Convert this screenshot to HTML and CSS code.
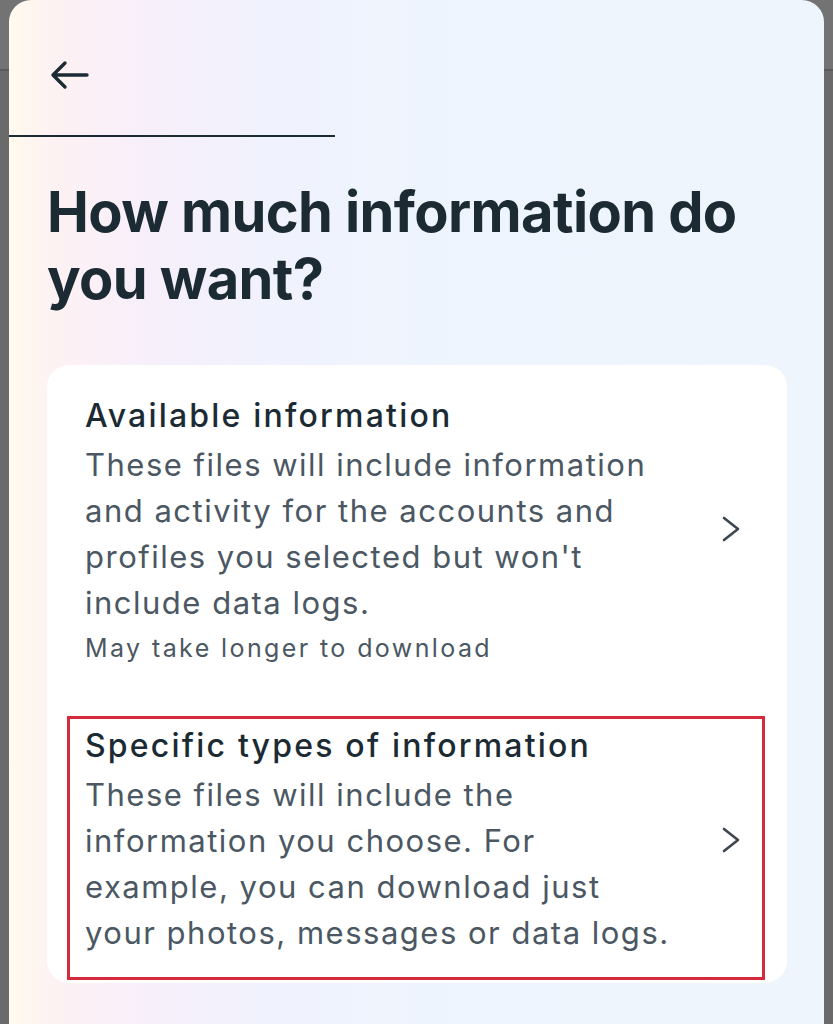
FILE: index.html
```
<html>
	<head>
		<title>Download your information</title>
		<meta name="viewport" content="width=device-width, initial-scale=1">
		<link rel="stylesheet" href="styles.css">
	</head>
	<body>
		<div id="sheet">
			<div id="topbar">
				<svg class="back" width="40" height="30" viewBox="0 0 40 30">
					<path d="M37 15H3M15 3L3 15L15 27" fill="none" stroke="#1c2b33" stroke-width="3.4" stroke-linecap="round" stroke-linejoin="round"/>
				</svg>
			</div>
			<div id="rule"></div>
			<h1>How much information do<br>you want?</h1>
			<div id="card">
				<div class="option">
					<div class="option_text">
						<div class="option_title">Available information</div>
						<div class="option_desc">These files will include information<br>and activity for the accounts and<br>profiles you selected but won't<br>include data logs.</div>
						<div class="option_note">May take longer to download</div>
					</div>
					<svg class="chev" width="18" height="26" viewBox="0 0 18 26">
						<path d="M2 2L16 13L2 24" fill="none" stroke="#3b4650" stroke-width="2.6" stroke-linecap="round" stroke-linejoin="round"/>
					</svg>
				</div>
				<div class="option marked">
					<div class="option_text">
						<div class="option_title">Specific types of information</div>
						<div class="option_desc">These files will include the<br>information you choose. For<br>example, you can download just<br>your photos, messages or data logs.</div>
					</div>
					<svg class="chev" width="18" height="26" viewBox="0 0 18 26">
						<path d="M2 2L16 13L2 24" fill="none" stroke="#3b4650" stroke-width="2.6" stroke-linecap="round" stroke-linejoin="round"/>
					</svg>
				</div>
			</div>
		</div>
	</body>
</html>
```
FILE: styles.css
```
* {
	font-family: Inter, "Noto Sans", sans-serif;
	box-sizing: border-box;
}
body {
	margin: 0;
	height: 1024px;
	overflow: hidden;
	background: linear-gradient(#737373 0 69px, #5c5c5c 69px 71px, #6a6a6a 71px);
}
#sheet {
	margin: 0 9px;
	height: 1024px;
	border-radius: 22px 22px 0 0;
	background: linear-gradient(to right, #fffaee 0%, #fdf1f3 6%, #f7effa 16%, #f0f2fd 32%, #eef4fd 50%, #eef5fd 100%);
	overflow: hidden;
}
#topbar {
	height: 135px;
	padding: 60px 0 0 41px;
}
.back {
	display: block;
}
#rule {
	width: 326px;
	height: 2px;
	background: #1c2b33;
}
h1 {
	margin: 42px 0 0 0;
	padding-left: 38px;
	font-size: 56px;
	line-height: 67px;
	font-weight: 700;
	color: #1c2b33;
	letter-spacing: -0.6px;
}
#card {
	margin: 52px 0 0 38px;
	width: 740px;
	background: white;
	border-radius: 22px;
	padding: 21px 22px 3px 20px;
	display: flex;
	flex-direction: column;
	gap: 27px;
}
.option {
	display: flex;
	align-items: center;
	justify-content: space-between;
	border: 3px solid transparent;
	padding: 4px 22px 21px 15px;
}
.option.marked {
	border-color: #d42a3c;
}
.option_title {
	font-size: 32px;
	line-height: 46px;
	font-weight: 500;
	color: #1c2b33;
	letter-spacing: 2.2px;
	margin-bottom: 3px;
}
.option_desc {
	font-size: 31px;
	line-height: 46px;
	color: #4b5863;
	letter-spacing: 1.5px;
}
.option_note {
	margin-top: 5px;
	font-size: 25px;
	line-height: 34px;
	color: #4b5863;
	letter-spacing: 2.4px;
}
.chev {
	flex: none;
}
```
